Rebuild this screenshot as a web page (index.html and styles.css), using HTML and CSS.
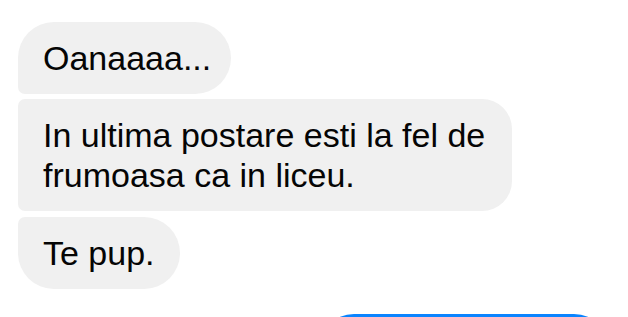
FILE: index.html
```html
<!DOCTYPE html>
<html lang="ro">

<head>
    <meta charset="UTF-8">
    <meta name="viewport" content="width=device-width, initial-scale=1.0">
    <title>chat</title>
    <link rel="stylesheet" href="styles.css">
</head>

<body>
    <div class="thread">
        <div class="msg in first">Oanaaaa...</div>
        <div class="msg in middle">In ultima postare esti la fel de frumoasa ca in liceu.</div>
        <div class="msg in last">Te pup.</div>
        <div class="msg out">&nbsp;</div>
    </div>
</body>

</html>
```

FILE: styles.css
```css
body {
    margin: 0;
    background-color: #fff;
    font-family: "Liberation Sans", Arial, sans-serif;
    overflow: hidden;
}

.thread {
    display: flex;
    flex-direction: column;
    align-items: flex-start;
    gap: 5px;
    padding: 22px 18px 0 18px;
}

.msg {
    max-width: 444px;
    padding: 16px 25px;
    font-size: 34px;
    line-height: 40px;
    color: #050505;
    background-color: #f0f0f0;
    border-radius: 36px;
}

.msg.first {
    padding-right: 20px;
    border-bottom-left-radius: 7px;
}

.msg.middle {
    border-top-left-radius: 7px;
    border-bottom-left-radius: 7px;
    border-top-right-radius: 30px;
    border-bottom-right-radius: 30px;
}

.msg.last {
    margin-top: 1px;
    border-top-left-radius: 7px;
}

.msg.out {
    align-self: flex-end;
    width: 242px;
    margin-top: 20px;
    color: #fff;
    background-color: #0a84ff;
}
```
